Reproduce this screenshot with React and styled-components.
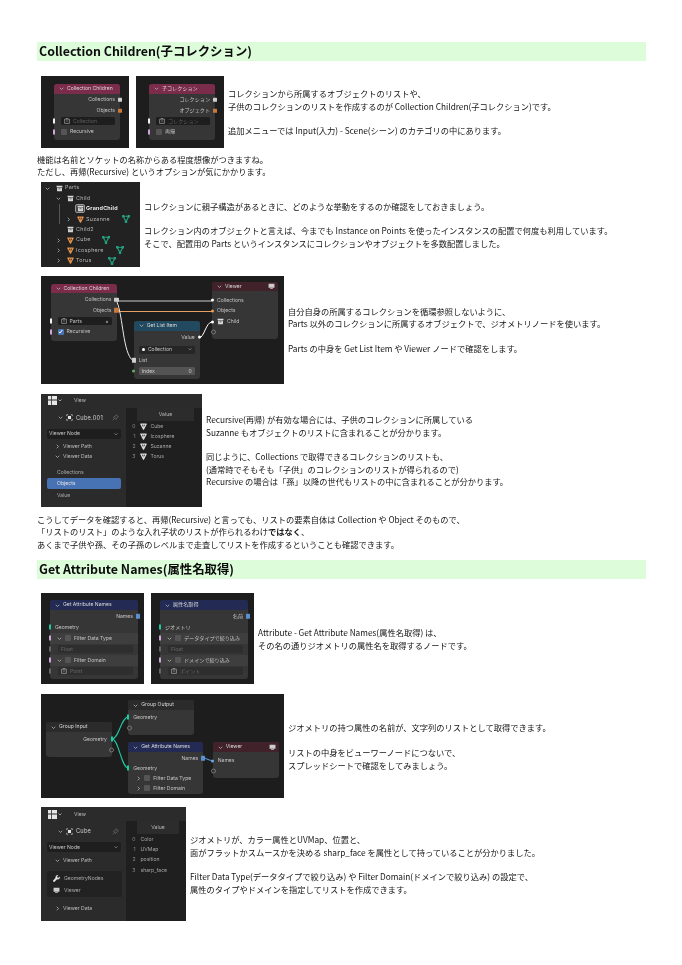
import React from 'react'
import styled, { createGlobalStyle } from 'styled-components'

const GlobalStyle = createGlobalStyle`
  html, body {
    margin: 0;
    background: #fff;
  }
`

const Page = styled.div`
  width: 682px;
  height: 965px;
  box-sizing: border-box;
  padding: 42px 36px 0 37px;
  overflow: hidden;
  font-family: "Noto Sans CJK JP", "Noto Sans", sans-serif;
  color: #141414;
  filter: blur(0.25px);
`

const Heading = styled.h2`
  margin: ${p => p.$mt || 0}px 0 0;
  height: 19px;
  padding-left: 2px;
  background: #dcfcda;
  font-size: 12.4px;
  line-height: 19px;
  font-weight: 700;
  color: #0c0c0c;
`

const Row = styled.div`
  display: flex;
  align-items: center;
  gap: 7px;
  margin-top: ${p => p.$mt || 0}px;
  padding-left: 4px;
`

const Text = styled.p`
  margin: 0 0 0 -3px;
  font-size: 8.25px;
  line-height: 12.45px;
  white-space: nowrap;
`

const Para = styled(Text)`
  margin: ${p => p.$mt || 0}px 0 0;
`

/* ---- dark screenshots ---- */

const Shot = styled.div`
  position: relative;
  flex: none;
  width: ${p => p.$w}px;
  height: ${p => p.$h}px;
  background: #1d1d1d;
  overflow: hidden;
  font-family: Inter, "Noto Sans CJK JP", sans-serif;
  font-size: 5.1px;
  line-height: 1;
  white-space: nowrap;
  color: #c4c4c4;
  filter: blur(0.15px);
`

const Node = styled.div`
  --row: ${p => p.$rh || 10.7}px;
  position: absolute;
  left: ${p => p.$x}px;
  top: ${p => p.$y}px;
  width: ${p => p.$w}px;
  height: ${p => p.$h}px;
  background: #363636;
  border-radius: 3px;
`

const NodeHead = styled.div`
  display: flex;
  align-items: center;
  gap: 3px;
  height: 9.5px;
  padding: 0 3px 0 5px;
  margin-bottom: ${p => p.$gap ?? 1}px;
  border-radius: 3px 3px 0 0;
  background: ${p => p.$color};
  color: #d8d8d8;
`

const HeadIcon = styled.span`
  display: flex;
  margin-left: auto;
`

const NodeRow = styled.div`
  position: relative;
  display: flex;
  align-items: center;
  justify-content: ${p => (p.$right ? 'flex-end' : 'flex-start')};
  gap: ${p => p.$gap ?? 3}px;
  height: var(--row);
  margin-top: ${p => p.$mt || 0}px;
  padding: 0 5px 0 ${p => p.$pl ?? 5}px;
  background: ${p => p.$band || 'transparent'};
`

const socketShape = {
  bar: 'width: 2px; height: 5px;',
  square: 'width: 4.4px; height: 4.4px; border-radius: 0.5px;',
  dot: 'width: 3.2px; height: 3.2px; border-radius: 50%;',
  ring: 'width: 3px; height: 3px; border-radius: 50%; background: transparent !important; border: 0.7px solid #777;',
}

const Socket = styled.span`
  position: absolute;
  top: 50%;
  ${p => (p.$right ? 'right' : 'left')}: ${p => p.$off ?? -1}px;
  transform: translateY(-50%);
  background: ${p => p.$color || '#ddd'};
  z-index: 2;
  ${p => socketShape[p.$shape || 'square']}
`

const Field = styled.div`
  display: flex;
  align-items: center;
  gap: 3px;
  flex: 1;
  min-width: 0;
  height: 8px;
  padding: 0 3px;
  border-radius: 1.5px;
  background: ${p => p.$bg || '#1e1e1e'};
  color: ${p => p.$color || '#5e5e5e'};
`

const FieldDot = styled.span`
  flex: none;
  width: 3.2px;
  height: 3.2px;
  border-radius: 50%;
  background: #fff;
`

const FieldEnd = styled.span`
  margin-left: auto;
  color: ${p => p.$color || 'inherit'};
`

const Check = styled.span`
  display: flex;
  flex: none;
  align-items: center;
  justify-content: center;
  width: 6px;
  height: 6px;
  border-radius: 1px;
  background: ${p => (p.$on ? '#4772b3' : '#555')};
`

const Wires = styled.svg`
  position: absolute;
  inset: 0;
  width: 100%;
  height: 100%;
  fill: none;
  z-index: 1;
`

/* ---- outliner ---- */

const Outliner = styled(Shot)`
  padding: 1px 0;
  box-sizing: border-box;
  background: #222;
`

const TreeRow = styled.div`
  position: relative;
  display: flex;
  align-items: center;
  height: 10.4px;
  padding-left: ${p => p.$indent}px;
  color: ${p => (p.$active ? '#fff' : '#b4b4b4')};
  font-size: 5.4px;
  font-weight: ${p => (p.$active ? 600 : 400)};
  letter-spacing: 0.25px;
`

const TreeTwist = styled.span`
  display: flex;
  flex: none;
  width: 7px;
  margin-left: -10px;
  margin-right: 3px;
`

const TreeIcon = styled.span`
  display: flex;
  flex: none;
  justify-content: center;
  width: 8px;
  margin-right: 2px;
  ${p => (p.$box ? 'outline: 0.6px solid #9a9a9a; border-radius: 1px; background: #444;' : '')}
`

const TreeMod = styled.span`
  display: flex;
  margin-left: ${p => p.$gap}px;
`

const TreeLine = styled.span`
  position: absolute;
  left: ${p => p.$x}px;
  top: 0;
  bottom: 0;
  width: 0.7px;
  background: #555;
`

/* ---- spreadsheet ---- */

const Sheet = styled(Shot)`
  display: grid;
  grid-template-columns: 85px 1fr;
  grid-template-rows: 14px 1fr;
  background: #1f1f1f;
`

const TopBar = styled.div`
  grid-column: 1 / 3;
  display: flex;
  align-items: center;
  gap: 3px;
  padding-left: 7px;
  background: #2b2b2b;
  color: #bbb;
`

const TopLabel = styled.span`
  margin-left: 9px;
`

const Side = styled.div`
  display: flex;
  flex-direction: column;
  background: #2b2b2b;
  padding-top: 3px;
`

const ObjectRow = styled.div`
  display: flex;
  align-items: center;
  gap: 3px;
  height: 14px;
  padding: 0 7px 0 17px;
  color: #d0d0d0;
  font-size: 5.7px;
  letter-spacing: 0.2px;
`

const Pin = styled.span`
  display: flex;
  margin-left: auto;
`

const Dropdown = styled.div`
  display: flex;
  align-items: center;
  justify-content: space-between;
  height: 10px;
  margin: 4px 5px 3px 6px;
  padding: 0 3px 0 2px;
  border-radius: 2px;
  background: #1e1e1e;
  color: #c6c6c6;
`

const Fold = styled.div`
  display: flex;
  align-items: center;
  gap: 3px;
  height: 10px;
  margin-top: ${p => p.$mt || 0}px;
  padding-left: 14px;
  color: #bdbdbd;
`

const SideItem = styled.div`
  display: flex;
  align-items: center;
  height: 11px;
  margin: 0 5px 0 6px;
  padding-left: 10px;
  margin-top: ${p => p.$mt || 0}px;
  border-radius: 2px;
  background: ${p => (p.$on ? '#4772b3' : 'transparent')};
  color: ${p => (p.$on ? '#e6e6e6' : '#a9a9a9')};
`

const PathBox = styled.div`
  display: flex;
  flex-direction: column;
  gap: 2px;
  height: 26px;
  box-sizing: border-box;
  margin: 6px 4px 0 6px;
  padding: 2px 0 0 6px;
  border-radius: 2px;
  background: #222;
`

const PathRow = styled.div`
  display: flex;
  align-items: center;
  gap: 4px;
  height: 10px;
  color: #a8a8a8;
`

const Table = styled.div`
  display: flex;
  flex-direction: column;
  padding-right: ${p => p.$pr}px;
`

const TableHead = styled.div`
  display: flex;
  align-items: center;
  justify-content: center;
  height: 13px;
  margin-left: 11px;
  background: #2c2c2c;
  color: #b8b8b8;
`

const TableRow = styled.div`
  display: flex;
  align-items: center;
  height: 10.3px;
  color: #a6a6a6;
`

const Cell0 = styled.span`
  flex: none;
  width: 9.5px;
  text-align: right;
  color: #8b8b8b;
  margin-right: ${p => p.$gap}px;
`

const CellIcon = styled.span`
  display: flex;
  margin-right: 4px;
`

/* ---- drawings ---- */

const Chevron = ({ open, size = 5, color = '#bbb' }) => (
  <svg width={size} height={size} viewBox="0 0 10 10" fill="none" stroke={color} strokeWidth="1.5" style={{ flex: 'none' }}>
    <path d={open ? 'M1.5 3.5 5 7l3.5-3.5' : 'M3.5 1.5 7 5 3.5 8.5'} />
  </svg>
)

const BoxIcon = ({ size = 7, color = '#d8d8d8' }) => (
  <svg width={size} height={size} viewBox="0 0 10 10" style={{ flex: 'none' }}>
    <path fill={color} d="M.8 1h8.4v2.2H.8zM1.5 4h7v5h-7z" />
    <path fill="#333" d="M3.5 5h3v1h-3z" />
  </svg>
)

const TriIcon = ({ size = 7, color = '#e8944c', width = 1.8 }) => (
  <svg width={size} height={size} viewBox="0 0 10 10" fill="none" stroke={color} strokeWidth={width} style={{ flex: 'none' }}>
    <path strokeLinejoin="round" d="M1.2 1.5h7.6L5 8.8z" />
    <path strokeWidth="1" d="M5 1.5v7" />
  </svg>
)

const ModIcon = () => (
  <svg width="8" height="8" viewBox="0 0 10 10" fill="none" stroke="#25a17f" strokeWidth="1.4" style={{ flex: 'none' }}>
    <path d="M1.5 1.5h7L5 8.5z" />
    <circle cx="1.5" cy="1.5" r="1" fill="#25a17f" />
    <circle cx="8.5" cy="1.5" r="1" fill="#25a17f" />
    <circle cx="5" cy="8.5" r="1" fill="#25a17f" />
  </svg>
)

const Monitor = ({ size = 7 }) => (
  <svg width={size} height={size} viewBox="0 0 10 10" style={{ flex: 'none' }}>
    <path fill="#ccc" d="M.8 1.2h8.4v5.6H.8zM3 7.5h4v1H3z" />
  </svg>
)

const EditorIcon = () => (
  <svg width="14" height="9" viewBox="0 0 14 9" style={{ flex: 'none' }}>
    <path fill="#e6e6e6" d="M0 0h3v3.6H0zM3.8 0H9v3.6H3.8zM0 4.4h3V9H0zM3.8 4.4H9V9H3.8z" />
    <path fill="none" stroke="#bbb" strokeWidth=".8" d="m10.5 3.5 1.5 1.5 1.5-1.5" />
  </svg>
)

const MeshDataIcon = () => (
  <svg width="7" height="7" viewBox="0 0 10 10" style={{ flex: 'none' }}>
    <path fill="none" stroke="#ccc" strokeWidth="1" d="M1 3V1h2M7 1h2v2M9 7v2H7M3 9H1V7" />
    <path fill="#e4e4e4" d="M2.8 2.8h4.4v4.4H2.8z" />
  </svg>
)

const PinIcon = () => (
  <svg width="7" height="7" viewBox="0 0 10 10" fill="none" stroke="#777" strokeWidth=".9" style={{ flex: 'none' }}>
    <path d="M6 1 9 4 7 5 5.5 7.8 2.2 4.5 5 3zM3.8 6.2 1 9" />
  </svg>
)

const Wrench = () => (
  <svg width="7" height="7" viewBox="0 0 10 10" fill="#e2e2e2" style={{ flex: 'none' }}>
    <path d="M9.6 2.2 7.8 4 6.2 3.6 5.8 2 7.6.3A3 3 0 0 0 3.7 4.1L.5 7.6a1.3 1.3 0 0 0 1.8 1.9l3.5-3.3a3 3 0 0 0 3.8-4z" />
  </svg>
)

const CheckMark = () => (
  <svg width="5" height="5" viewBox="0 0 10 10" fill="none" stroke="#fff" strokeWidth="2">
    <path d="M1.5 5.5 4 8l4.5-6" />
  </svg>
)

const FieldBox = () => (
  <svg width="6" height="6" viewBox="0 0 10 10" fill="none" stroke="#bbb" strokeWidth="1" style={{ flex: 'none' }}>
    <path d="M1 2h8v7H1zM3 .8h4M3.5 5h3" />
  </svg>
)

const CollectionChildrenCard = ({ title, collections, objects, collection, recursive }) => (
  <Shot $w={88} $h={72}>
    <Node $x={13} $y={8} $w={66} $h={56}>
      <NodeHead $color="#7b2c4a">
        <Chevron open />
        {title}
      </NodeHead>
      <NodeRow $right>
        {collections}
        <Socket $right $off={-2} $color="#cfcfcf" />
      </NodeRow>
      <NodeRow $right>
        {objects}
        <Socket $right $off={-2} $color="#c9793a" />
      </NodeRow>
      <NodeRow $pl={7}>
        <Socket $shape="bar" $color="#f2f2f2" />
        <Field>
          <FieldBox />
          {collection}
        </Field>
      </NodeRow>
      <NodeRow $pl={7}>
        <Socket $shape="bar" $color="#cfa6dc" />
        <Check />
        {recursive}
      </NodeRow>
    </Node>
  </Shot>
)

const AttributeNamesCard = ({ title, names, geometry, dataType, float, domain, point }) => (
  <Shot $w={103} $h={91}>
    <Node $x={9} $y={7} $w={88} $h={79} $rh={11}>
      <NodeHead $color="#232b55">
        <Chevron open />
        {title}
      </NodeHead>
      <NodeRow $right>
        {names}
        <Socket $right $off={-2} $color="#5a8fd0" />
      </NodeRow>
      <NodeRow>
        <Socket $shape="bar" $color="#1fc8a0" />
        {geometry}
      </NodeRow>
      <NodeRow $band="#3e3e3e" $pl={7}>
        <Socket $shape="bar" $color="#cfa6dc" />
        <Chevron open />
        <Check />
        {dataType}
      </NodeRow>
      <NodeRow $pl={8}>
        <Socket $shape="bar" $color="#666" />
        <Field $bg="#2e2e2e" $color="#666">{float}</Field>
      </NodeRow>
      <NodeRow $band="#3e3e3e" $pl={7}>
        <Socket $shape="bar" $color="#cfa6dc" />
        <Chevron open />
        <Check />
        {domain}
      </NodeRow>
      <NodeRow $pl={8}>
        <Socket $shape="bar" $color="#666" />
        <Field $bg="#2e2e2e" $color="#666">
          <FieldBox />
          {point}
        </Field>
      </NodeRow>
    </Node>
  </Shot>
)

const ViewerHead = () => (
  <NodeHead $color="#41222a" $gap={3.5}>
    <Chevron open />
    Viewer
    <HeadIcon>
      <Monitor />
    </HeadIcon>
  </NodeHead>
)

export default function App() {
  return (
    <Page>
      <GlobalStyle />
      <Heading>Collection Children(子コレクション)</Heading>

      <Row $mt={15}>
        <CollectionChildrenCard
          title="Collection Children"
          collections="Collections"
          objects="Objects"
          collection="Collection"
          recursive="Recursive"
        />
        <CollectionChildrenCard
          title="子コレクション"
          collections="コレクション"
          objects="オブジェクト"
          collection="コレクション"
          recursive="再帰"
        />
        <Text>
          コレクションから所属するオブジェクトのリストや、
          <br />
          子供のコレクションのリストを作成するのが Collection Children(子コレクション)です。
          <br />
          <br />
          追加メニューでは Input(入力) - Scene(シーン) のカテゴリの中にあります。
        </Text>
      </Row>

      <Para $mt={5}>
        機能は名前とソケットの名称からある程度想像がつきますね。
        <br />
        ただし、再帰(Recursive) というオプションが気にかかります。
      </Para>

      <Row $mt={4}>
        <Outliner $w={99} $h={85}>
          <TreeRow $indent={14}>
            <TreeTwist><Chevron open /></TreeTwist>
            <TreeIcon><BoxIcon /></TreeIcon>
            Parts
          </TreeRow>
          <TreeRow $indent={25}>
            <TreeTwist><Chevron open /></TreeTwist>
            <TreeIcon><BoxIcon /></TreeIcon>
            Child
          </TreeRow>
          <TreeRow $indent={35} $active>
            <TreeLine $x={18} />
            <TreeIcon $box><BoxIcon /></TreeIcon>
            GrandChild
          </TreeRow>
          <TreeRow $indent={35}>
            <TreeLine $x={18} />
            <TreeTwist><Chevron /></TreeTwist>
            <TreeIcon><TriIcon /></TreeIcon>
            Suzanne
            <TreeMod $gap={12}><ModIcon /></TreeMod>
          </TreeRow>
          <TreeRow $indent={25}>
            <TreeIcon><BoxIcon /></TreeIcon>
            Child2
          </TreeRow>
          <TreeRow $indent={25}>
            <TreeTwist><Chevron /></TreeTwist>
            <TreeIcon><TriIcon /></TreeIcon>
            Cube
            <TreeMod $gap={11}><ModIcon /></TreeMod>
          </TreeRow>
          <TreeRow $indent={25}>
            <TreeTwist><Chevron /></TreeTwist>
            <TreeIcon><TriIcon /></TreeIcon>
            Icosphere
            <TreeMod $gap={12}><ModIcon /></TreeMod>
          </TreeRow>
          <TreeRow $indent={25}>
            <TreeTwist><Chevron /></TreeTwist>
            <TreeIcon><TriIcon /></TreeIcon>
            Torus
            <TreeMod $gap={16}><ModIcon /></TreeMod>
          </TreeRow>
        </Outliner>
        <Text>
          コレクションに親子構造があるときに、どのような挙動をするのか確認をしておきましょう。
          <br />
          <br />
          コレクション内のオブジェクトと言えば、今までも Instance on Points を使ったインスタンスの配置で何度も利用しています。
          <br />
          そこで、配置用の Parts というインスタンスにコレクションやオブジェクトを多数配置しました。
        </Text>
      </Row>

      <Row $mt={9}>
        <Shot $w={243} $h={108}>
          <Node $x={9.5} $y={8} $w={66} $h={57}>
            <NodeHead $color="#7b2c4a">
              <Chevron open />
              Collection Children
            </NodeHead>
            <NodeRow $right>
              Collections
              <Socket $right $off={-2} $color="#cfcfcf" />
            </NodeRow>
            <NodeRow $right>
              Objects
              <Socket $right $off={-2} $color="#c9793a" />
            </NodeRow>
            <NodeRow $pl={7}>
              <Socket $shape="bar" $color="#f2f2f2" />
              <Field $color="#c4c4c4">
                <FieldBox />
                Parts
                <FieldEnd>×</FieldEnd>
              </Field>
            </NodeRow>
            <NodeRow $pl={7}>
              <Socket $shape="bar" $color="#cfa6dc" />
              <Check $on><CheckMark /></Check>
              Recursive
            </NodeRow>
          </Node>
          <Node $x={92.7} $y={45.3} $w={66} $h={57.5}>
            <NodeHead $color="#214a60">
              <Chevron open />
              Get List Item
            </NodeHead>
            <NodeRow $right>
              Value
              <Socket $right $off={-1.5} $shape="dot" $color="#fff" />
            </NodeRow>
            <NodeRow $mt={2}>
              <Field $bg="#262626" $color="#c8c8c8">
                <FieldDot />
                Collection
                <FieldEnd><Chevron open size={4} /></FieldEnd>
              </Field>
            </NodeRow>
            <NodeRow>
              <Socket $off={-2} $color="#cfcfcf" />
              List
            </NodeRow>
            <NodeRow>
              <Socket $off={-1.5} $shape="dot" $color="#5fb06a" />
              <Field $bg="#545454" $color="#d0d0d0">
                Index
                <FieldEnd>0</FieldEnd>
              </Field>
            </NodeRow>
          </Node>
          <Node $x={171} $y={6} $w={66} $h={57}>
            <ViewerHead />
            <NodeRow>
              <Socket $off={-1.5} $shape="dot" $color="#fff" />
              Collections
            </NodeRow>
            <NodeRow>
              <Socket $off={-1.5} $shape="dot" $color="#ee9c55" />
              Objects
            </NodeRow>
            <NodeRow>
              <Socket $off={-1.5} $shape="dot" $color="#fff" />
              <BoxIcon />
              Child
            </NodeRow>
            <NodeRow>
              <Socket $off={-1.5} $shape="ring" />
            </NodeRow>
          </Node>
          <Wires viewBox="0 0 243 108">
            <path stroke="#000" strokeWidth="2" d="M75.5 25H171" />
            <path stroke="#e8e8e8" strokeWidth="1.2" d="M75.5 25H171" />
            <path stroke="#e8a060" strokeWidth="1.2" d="M75.5 35.5H171" />
            <path stroke="#e8e8e8" strokeWidth="1" d="M76 26C82 40 82 78 92 84.6" />
            <path stroke="#fff" strokeWidth="1" d="M158 62C163 62 165 46 171 46" />
          </Wires>
        </Shot>
        <Text>
          自分自身の所属するコレクションを循環参照しないように、
          <br />
          Parts 以外のコレクションに所属するオブジェクトで、ジオメトリノードを使います。
          <br />
          <br />
          Parts の中身を Get List Item や Viewer ノードで確認をします。
        </Text>
      </Row>

      <Row $mt={10}>
        <Sheet $w={161} $h={113}>
          <TopBar>
            <EditorIcon />
            <TopLabel>View</TopLabel>
          </TopBar>
          <Side>
            <ObjectRow>
              <Chevron open />
              <MeshDataIcon />
              Cube.001
              <Pin><PinIcon /></Pin>
            </ObjectRow>
            <Dropdown>
              Viewer Node
              <Chevron open size={4} />
            </Dropdown>
            <Fold><Chevron />Viewer Path</Fold>
            <Fold><Chevron open />Viewer Data</Fold>
            <SideItem $mt={5.5}>Collections</SideItem>
            <SideItem $on>Objects</SideItem>
            <SideItem $mt={0.5}>Value</SideItem>
          </Side>
          <Table $pr={8}>
            <TableHead>Value</TableHead>
            {['Cube', 'Icosphere', 'Suzanne', 'Torus'].map((name, i) => (
              <TableRow key={name}>
                <Cell0 $gap={4}>{i}</Cell0>
                <CellIcon><TriIcon color="#e0e0e0" /></CellIcon>
                {name}
              </TableRow>
            ))}
          </Table>
        </Sheet>
        <Text>
          Recursive(再帰) が有効な場合には、子供のコレクションに所属している
          <br />
          Suzanne もオブジェクトのリストに含まれることが分かります。
          <br />
          <br />
          同じように、Collections で取得できるコレクションのリストも、
          <br />
          (通常時でそもそも「子供」のコレクションのリストが得られるので)
          <br />
          Recursive の場合は「孫」以降の世代もリストの中に含まれることが分かります。
        </Text>
      </Row>

      <Para $mt={6}>
        こうしてデータを確認すると、再帰(Recursive) と言っても、リストの要素自体は Collection や Object そのもので、
        <br />
        「リストのリスト」のような入れ子状のリストが作られるわけ<b>ではなく</b>、
        <br />
        あくまで子供や孫、その子孫のレベルまで走査してリストを作成するということも確認できます。
      </Para>

      <Heading $mt={10}>Get Attribute Names(属性名取得)</Heading>

      <Row $mt={14}>
        <AttributeNamesCard
          title="Get Attribute Names"
          names="Names"
          geometry="Geometry"
          dataType="Filter Data Type"
          float="Float"
          domain="Filter Domain"
          point="Point"
        />
        <AttributeNamesCard
          title="属性名取得"
          names="名前"
          geometry="ジオメトリ"
          dataType="データタイプで絞り込み"
          float="Float"
          domain="ドメインで絞り込み"
          point="ポイント"
        />
        <Text>
          Attribute - Get Attribute Names(属性名取得) は、
          <br />
          その名の通りジオメトリの属性名を取得するノードです。
        </Text>
      </Row>

      <Row $mt={10}>
        <Shot $w={243} $h={104}>
          <Node $x={5} $y={28} $w={66} $h={35}>
            <NodeHead $color="#2b2b2b" $gap={2}>
              <Chevron open />
              Group Input
            </NodeHead>
            <NodeRow $right>
              Geometry
              <Socket $right $off={-1} $shape="bar" $color="#1fc8a0" />
            </NodeRow>
            <NodeRow>
              <Socket $right $off={-1.5} $shape="ring" />
            </NodeRow>
          </Node>
          <Node $x={87.3} $y={6} $w={66} $h={35}>
            <NodeHead $color="#2b2b2b" $gap={2}>
              <Chevron open />
              Group Output
            </NodeHead>
            <NodeRow>
              <Socket $shape="bar" $color="#1fc8a0" />
              Geometry
            </NodeRow>
            <NodeRow>
              <Socket $off={-1.5} $shape="ring" />
            </NodeRow>
          </Node>
          <Node $x={87.3} $y={48} $w={75} $h={52} $rh={10}>
            <NodeHead $color="#232b55" $gap={1.5}>
              <Chevron open />
              Get Attribute Names
            </NodeHead>
            <NodeRow $right>
              Names
              <Socket $right $off={-2} $color="#5a8fd0" />
            </NodeRow>
            <NodeRow>
              <Socket $shape="bar" $color="#1fc8a0" />
              Geometry
            </NodeRow>
            <NodeRow $pl={8}>
              <Chevron />
              <Check />
              Filter Data Type
            </NodeRow>
            <NodeRow $pl={8}>
              <Chevron />
              <Check />
              Filter Domain
            </NodeRow>
          </Node>
          <Node $x={171.7} $y={48} $w={66} $h={36}>
            <ViewerHead />
            <NodeRow>
              <Socket $off={-1.5} $shape="dot" $color="#6ea6e6" />
              Names
            </NodeRow>
            <NodeRow>
              <Socket $off={-1.5} $shape="ring" />
            </NodeRow>
          </Node>
          <Wires viewBox="0 0 243 104">
            <path stroke="#1fc8a0" strokeWidth="1.1" d="M71 45C78 45 80 22.7 87.7 22.7" />
            <path stroke="#1fc8a0" strokeWidth="1.1" d="M71 45C78 45 80 74.3 87.7 74.3" />
            <path stroke="#5a8fd0" strokeWidth="1.1" d="M162 64C166 64 167 66.7 171.7 66.7" />
          </Wires>
        </Shot>
        <Text>
          ジオメトリの持つ属性の名前が、文字列のリストとして取得できます。
          <br />
          <br />
          リストの中身をビューワーノードにつないで、
          <br />
          スプレッドシートで確認をしてみましょう。
        </Text>
      </Row>

      <Row $mt={9}>
        <Sheet $w={145} $h={114}>
          <TopBar>
            <EditorIcon />
            <TopLabel>View</TopLabel>
          </TopBar>
          <Side>
            <ObjectRow>
              <Chevron open />
              <MeshDataIcon />
              Cube
              <Pin><PinIcon /></Pin>
            </ObjectRow>
            <Dropdown>
              Viewer Node
              <Chevron open size={4} />
            </Dropdown>
            <Fold><Chevron open />Viewer Path</Fold>
            <PathBox>
              <PathRow><Wrench />GeometryNodes</PathRow>
              <PathRow><Monitor />Viewer</PathRow>
            </PathBox>
            <Fold $mt={6}><Chevron />Viewer Data</Fold>
          </Side>
          <Table $pr={7}>
            <TableHead>Value</TableHead>
            {['Color', 'UVMap', 'position', 'sharp_face'].map((name, i) => (
              <TableRow key={name}>
                <Cell0 $gap={5}>{i}</Cell0>
                {name}
              </TableRow>
            ))}
          </Table>
        </Sheet>
        <Text>
          ジオメトリが、カラー属性とUVMap、位置と、
          <br />
          面がフラットかスムースかを決める sharp_face を属性として持っていることが分かりました。
          <br />
          <br />
          Filter Data Type(データタイプで絞り込み) や Filter Domain(ドメインで絞り込み) の設定で、
          <br />
          属性のタイプやドメインを指定してリストを作成できます。
        </Text>
      </Row>
    </Page>
  )
}
